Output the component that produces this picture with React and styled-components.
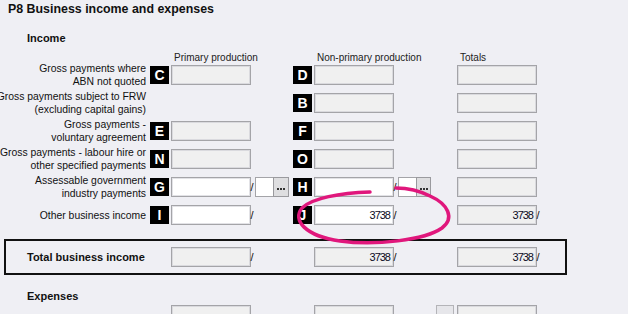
import React from "react";
import styled, { createGlobalStyle } from "styled-components";

const GlobalStyle = createGlobalStyle`
  html, body {
    margin: 0;
    background: #efeff4;
  }
  body {
    font-family: "Liberation Sans", Arial, sans-serif;
    color: #000;
  }
`;

const Page = styled.div`
  position: relative;
  width: 628px;
  height: 314px;
  overflow: hidden;
  background: #efeff4;
`;

const Title = styled.h1`
  margin: 0;
  padding-left: 8px;
  font-size: 12.4px;
  line-height: 18px;
  font-weight: bold;
  color: #111;
`;

const SectionHeading = styled.h2`
  margin: ${(p) => p.$top}px 0 0 27px;
  font-size: 11px;
  line-height: 14px;
  font-weight: bold;
  color: #111;
`;

const HeaderRow = styled.div`
  display: flex;
  margin-top: 6px;
  height: 12px;
  align-items: center;
`;

const ColHeader = styled.div`
  width: ${(p) => p.$w}px;
  padding-left: ${(p) => p.$pad}px;
  box-sizing: border-box;
  font-size: 10px;
  color: #222;
  white-space: nowrap;
`;

const Rows = styled.div`
  display: flex;
  flex-direction: column;
  gap: 8px;
  margin-top: 2px;
`;

const FormRow = styled.div`
  display: flex;
  align-items: center;
  height: 20px;
`;

const Label = styled.div`
  width: 146px;
  margin-right: 4px;
  display: flex;
  flex-direction: column;
  align-items: flex-end;
  font-size: 10.4px;
  line-height: 13px;
  white-space: nowrap;
  flex-shrink: 0;
  color: #111;
`;

const Cell = styled.div`
  width: ${(p) => p.$w}px;
  display: flex;
  align-items: center;
  flex-shrink: 0;
`;

const LetterBox = styled.div`
  width: 19px;
  height: 18px;
  margin-right: 2px;
  flex-shrink: 0;
  background: ${(p) => (p.$empty ? "transparent" : "#000")};
  color: #fff;
  font-weight: bold;
  font-size: 14px;
  line-height: 18px;
  text-align: center;
`;

const Field = styled.div`
  width: 80px;
  height: 20px;
  box-sizing: border-box;
  flex-shrink: 0;
  border: 1px solid #a4a4a8;
  box-shadow: inset 0 0 0 1px ${(p) => (p.$editable ? "#e2e2e6" : "#dadade")};
  background: ${(p) => (p.$editable ? "#fff" : "#f0f0f0")};
  font-size: 11px;
  letter-spacing: -1px;
  line-height: 18px;
  text-align: right;
  padding-right: 3px;
  color: #0a0a1e;
`;

const Slash = styled.span`
  width: 4px;
  margin-left: -1px;
  margin-right: 1px;
  font-size: 11px;
  line-height: 20px;
  color: #111;
  flex-shrink: 0;
  text-align: center;
`;

const PickerInput = styled.div`
  width: 18px;
  height: 20px;
  box-sizing: border-box;
  border: 1px solid #a4a4a8;
  border-right: none;
  background: #fff;
  flex-shrink: 0;
`;

const PickerButton = styled.div`
  width: ${(p) => p.$w}px;
  height: 20px;
  box-sizing: border-box;
  border: 1px solid #9a9a9e;
  background: #dedee0;
  flex-shrink: 0;
  display: flex;
  justify-content: center;
  align-items: center;
  gap: 1px;
  padding-top: 3px;
`;

const Dot = styled.span`
  width: 2px;
  height: 2px;
  background: #333;
`;

const TotalBox = styled.div`
  margin: 14px 0 0 4px;
  width: 563px;
  height: 36px;
  box-sizing: border-box;
  border: 2px solid #111;
  display: flex;
  align-items: center;
`;

const TotalLabel = styled.div`
  width: 144px;
  padding-left: 21px;
  box-sizing: border-box;
  font-size: 11px;
  font-weight: bold;
  color: #111;
  white-space: nowrap;
  flex-shrink: 0;
`;

const SmallBox = styled.div`
  width: 18px;
  height: 20px;
  box-sizing: border-box;
  border: 1px solid #b4b4b8;
  background: #e6e6ea;
  margin-right: 3px;
  flex-shrink: 0;
`;

const Annotation = styled.svg`
  position: absolute;
  left: 0;
  top: 0;
  pointer-events: none;
`;

const rows = [
  {
    label: ["Gross payments where", "ABN not quoted"],
    a: { letter: "C" },
    b: { letter: "D" },
  },
  {
    label: ["Gross payments subject to FRW", "(excluding capital gains)"],
    a: null,
    b: { letter: "B" },
  },
  {
    label: ["Gross payments -", "voluntary agreement"],
    a: { letter: "E" },
    b: { letter: "F" },
  },
  {
    label: ["Gross payments - labour hire or", "other specified payments"],
    a: { letter: "N" },
    b: { letter: "O" },
  },
  {
    label: ["Assessable government", "industry payments"],
    a: { letter: "G", editable: true, picker: 16 },
    b: { letter: "H", editable: true, picker: 15 },
  },
  {
    label: ["Other business income"],
    a: { letter: "I", editable: true, slash: true },
    b: { letter: "J", editable: true, slash: true, value: "3738" },
    total: { slash: true, value: "3738" },
  },
];

function Entry({ item }) {
  if (!item) return null;
  return (
    <>
      {item.letter !== undefined && <LetterBox $empty={!item.letter}>{item.letter}</LetterBox>}
      <Field $editable={item.editable}>{item.value}</Field>
      {(item.slash || item.picker) && <Slash>/</Slash>}
      {item.picker && (
        <>
          <PickerInput />
          <PickerButton $w={item.picker}>
            <Dot />
            <Dot />
            <Dot />
          </PickerButton>
        </>
      )}
    </>
  );
}

export default function App() {
  return (
    <Page>
      <GlobalStyle />
      <Title>P8 Business income and expenses</Title>
      <SectionHeading $top={13}>Income</SectionHeading>

      <HeaderRow>
        <ColHeader $w={150} $pad={0} />
        <ColHeader $w={143} $pad={24}>Primary production</ColHeader>
        <ColHeader $w={164} $pad={24}>Non-primary production</ColHeader>
        <ColHeader $w={100} $pad={3}>Totals</ColHeader>
      </HeaderRow>

      <Rows>
        {rows.map((row, i) => (
          <FormRow key={i}>
            <Label>
              {row.label.map((line) => (
                <span key={line}>{line}</span>
              ))}
            </Label>
            <Cell $w={143}>
              <Entry item={row.a} />
            </Cell>
            <Cell $w={164}>
              <Entry item={row.b} />
            </Cell>
            <Cell $w={100}>
              <Entry item={row.total || {}} />
            </Cell>
          </FormRow>
        ))}
      </Rows>

      <TotalBox>
        <TotalLabel>Total business income</TotalLabel>
        <Cell $w={143}>
          <Entry item={{ letter: "", slash: true }} />
        </Cell>
        <Cell $w={164}>
          <Entry item={{ letter: "", slash: true, value: "3738" }} />
        </Cell>
        <Cell $w={100}>
          <Entry item={{ slash: true, value: "3738" }} />
        </Cell>
      </TotalBox>

      <SectionHeading $top={14}>Expenses</SectionHeading>

      <Rows>
        <FormRow>
          <Label />
          <Cell $w={143}>
            <Entry item={{ letter: "" }} />
          </Cell>
          <Cell $w={143}>
            <Entry item={{ letter: "" }} />
          </Cell>
          <SmallBox />
          <Cell $w={100}>
            <Entry item={{}} />
          </Cell>
        </FormRow>
      </Rows>

      <Annotation width="628" height="314" viewBox="0 0 628 314">
        <path
          d="M370,192 C340,193 312,198 302,208 C292,220 305,236 340,241 C375,246 425,240 442,228 C455,218 448,204 430,196 C418,190 405,188 396,188"
          fill="none"
          stroke="#e0177c"
          strokeWidth="3.5"
          strokeLinecap="round"
        />
      </Annotation>
    </Page>
  );
}
